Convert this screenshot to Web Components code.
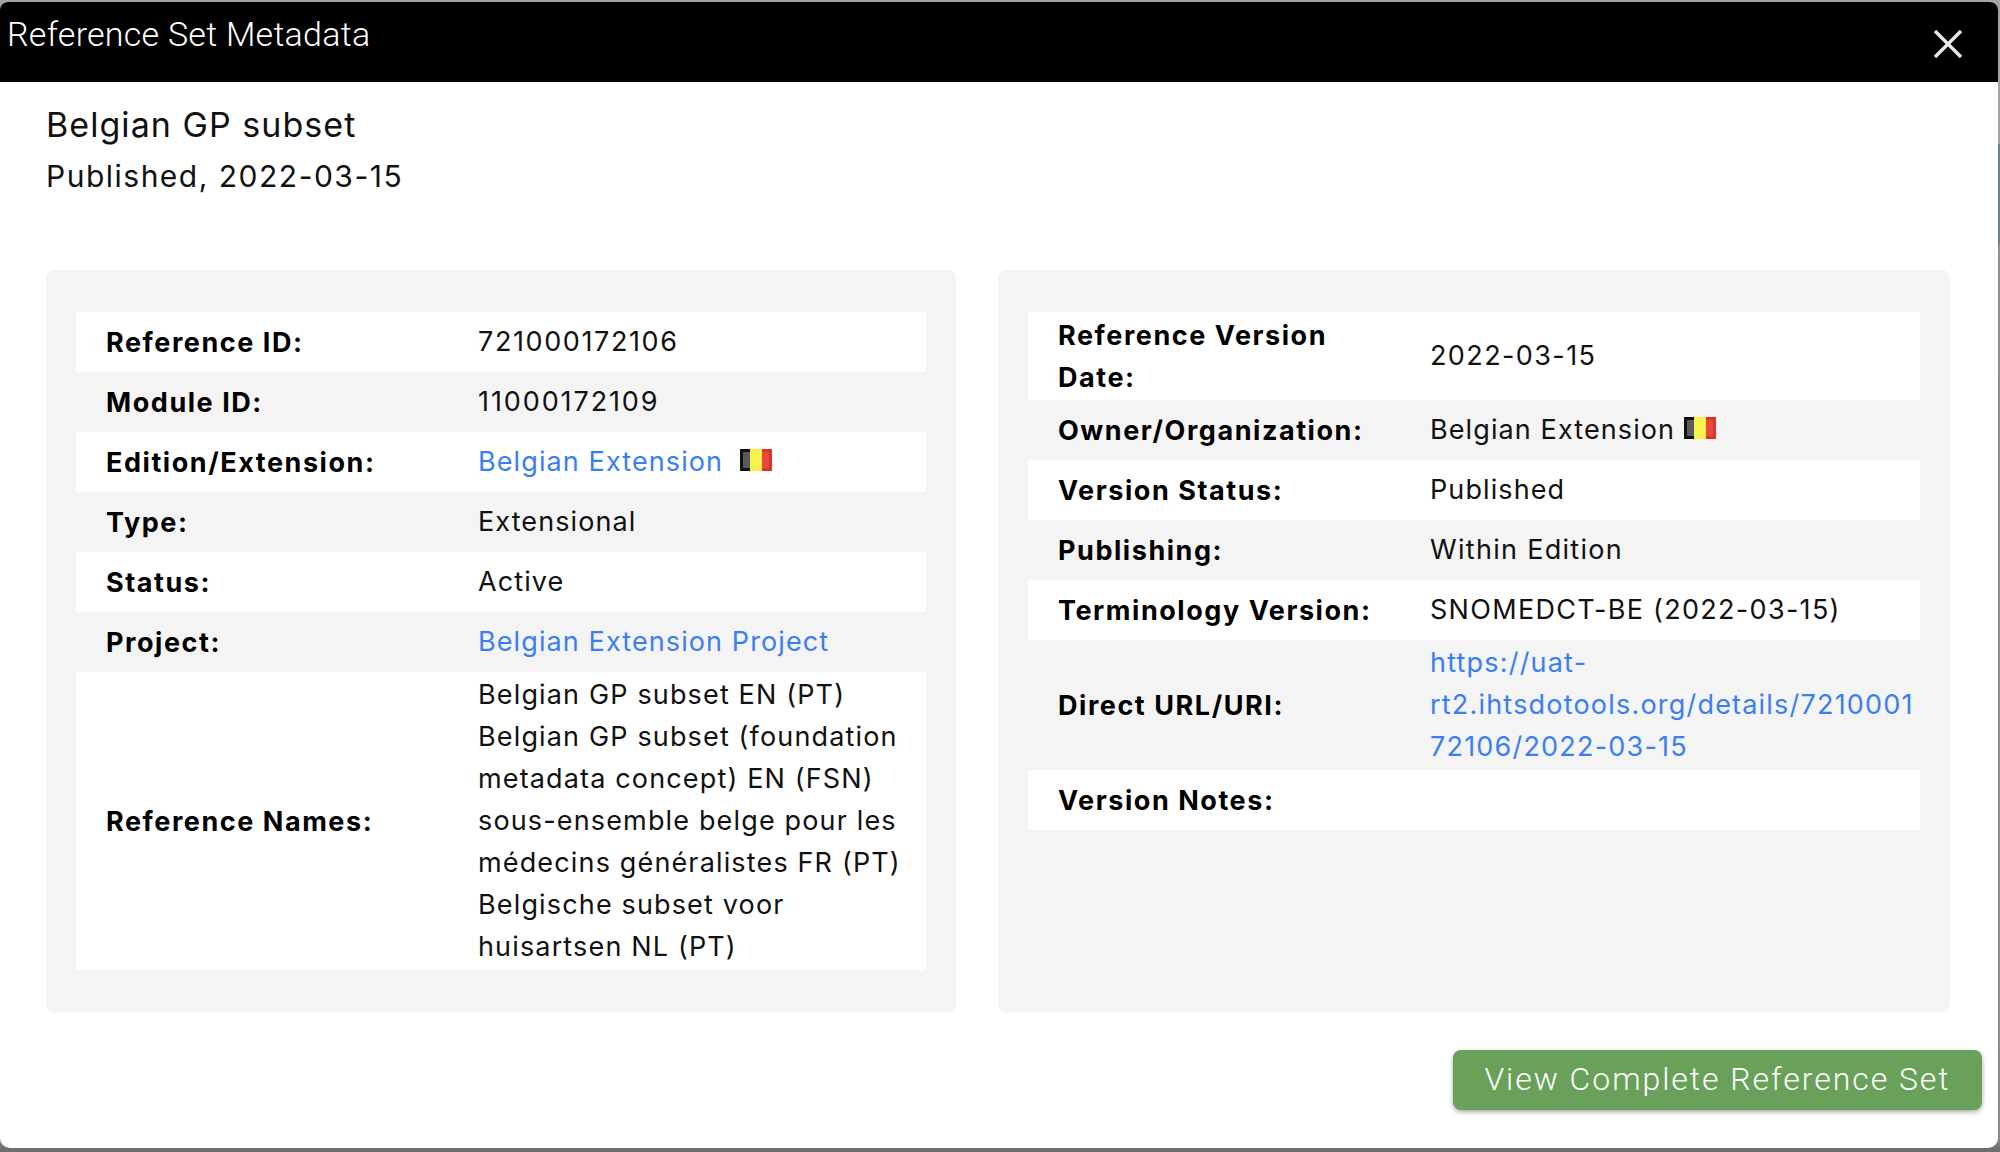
<!DOCTYPE html>
<html>
<head>
<meta charset="utf-8">
<title>Reference Set Metadata</title>
<style>
  html, body { margin: 0; height: 100%; }
  body {
    height: 1152px;
    overflow: hidden;
    background: linear-gradient(#a3a3a3 0, #a3a3a3 144px, #6b7f99 144px, #6b7f99 244px, #919191 244px, #8a8a8a 1140px, #707070 1148px, #6e6e6e 100%);
    font-family: Inter, "Liberation Sans", sans-serif;
  }
</style>
</head>
<body>
<meta-dialog heading="Reference Set Metadata">
  <meta-summary slot="summary" name="Belgian GP subset" status="Published, 2022-03-15"></meta-summary>

  <meta-panel>
    <meta-row label="Reference ID:" style="letter-spacing: 1.6px">721000172106</meta-row>
    <meta-row label="Module ID:" style="letter-spacing: 1.9px">11000172109</meta-row>
    <meta-row label="Edition/Extension:"><a href="#">Belgian Extension</a><be-flag gap="17"></be-flag></meta-row>
    <meta-row label="Type:">Extensional</meta-row>
    <meta-row label="Status:">Active</meta-row>
    <meta-row label="Project:"><a href="#">Belgian Extension Project</a></meta-row>
    <meta-row label="Reference Names:" style="letter-spacing: 1.15px">
      <div>Belgian GP subset EN (PT)</div>
      <div>Belgian GP subset (foundation metadata concept) EN (FSN)</div>
      <div>sous-ensemble belge pour les médecins généralistes FR (PT)</div>
      <div>Belgische subset voor huisartsen NL (PT)</div>
    </meta-row>
  </meta-panel>

  <meta-panel>
    <meta-row label="Reference Version Date:" style="letter-spacing: 1.4px">2022-03-15</meta-row>
    <meta-row label="Owner/Organization:">Belgian Extension<be-flag gap="9"></be-flag></meta-row>
    <meta-row label="Version Status:">Published</meta-row>
    <meta-row label="Publishing:" style="letter-spacing: 1.3px">Within Edition</meta-row>
    <meta-row label="Terminology Version:" style="letter-spacing: 1.3px">SNOMEDCT-BE (2022-03-15)</meta-row>
    <meta-row label="Direct URL/URI:" style="letter-spacing: 1.2px"><a href="#">https://uat-rt2.ihtsdotools.org/details/721000172106/2022-03-15</a></meta-row>
    <meta-row label="Version Notes:"></meta-row>
  </meta-panel>

  <meta-button slot="actions">View Complete Reference Set</meta-button>
</meta-dialog>

<script>
const dialogTemplate = document.createElement('template');
dialogTemplate.innerHTML = `
  <style>
    :host {
      display: flex;
      flex-direction: column;
      box-sizing: border-box;
      height: 1146px;
      margin: 2px 2px 0 0;
      background: #fff;
      border-radius: 8px 8px 10px 10px;
      overflow: hidden;
    }
    header {
      display: flex;
      justify-content: space-between;
      height: 80px;
      padding: 0 36px 0 7px;
      background: #000;
      color: #fff;
      font: 300 34px/64px Roboto, "Liberation Sans", sans-serif;
      letter-spacing: 0.25px;
    }
    header svg { width: 28px; height: 28px; margin-top: 28px; }
    main {
      flex: 1;
      display: grid;
      grid-template-columns: 910px 952px;
      column-gap: 42px;
      align-content: start;
      padding: 0 48px 0 46px;
    }
    ::slotted([slot="summary"]) { grid-column: 1 / -1; }
    footer {
      display: flex;
      justify-content: flex-end;
      padding: 0 16px 38px 0;
    }
  </style>
  <header>
    <span id="title"></span>
    <svg viewBox="0 0 28 28"><path d="M1 1 27 27M27 1 1 27" stroke="#ececec" stroke-width="3.4" fill="none"/></svg>
  </header>
  <main>
    <slot name="summary"></slot>
    <slot></slot>
  </main>
  <footer><slot name="actions"></slot></footer>
`;

class MetaDialog extends HTMLElement {
  constructor() {
    super();
    this.attachShadow({ mode: 'open' });
  }

  connectedCallback() {
    this.shadowRoot.appendChild(dialogTemplate.content.cloneNode(true));
    this.shadowRoot.querySelector('#title').textContent = this.getAttribute('heading');
  }
}

const summaryTemplate = document.createElement('template');
summaryTemplate.innerHTML = `
  <style>
    :host {
      display: block;
      height: 188px;
      padding-top: 20px;
      box-sizing: border-box;
      color: #111;
    }
    div { font-size: 34px; line-height: 46px; letter-spacing: 1.05px; }
    p { margin: 6px 0 0; font-size: 30px; line-height: 44px; letter-spacing: 1.5px; }
  </style>
  <div id="name"></div>
  <p id="status"></p>
`;

class MetaSummary extends HTMLElement {
  constructor() {
    super();
    this.attachShadow({ mode: 'open' });
  }

  connectedCallback() {
    this.shadowRoot.appendChild(summaryTemplate.content.cloneNode(true));
    this.shadowRoot.querySelector('#name').textContent = this.getAttribute('name');
    this.shadowRoot.querySelector('#status').textContent = this.getAttribute('status');
  }
}

const panelTemplate = document.createElement('template');
panelTemplate.innerHTML = `
  <style>
    :host {
      display: block;
      height: 742px;
      box-sizing: border-box;
      padding: 42px 30px;
      background: #f4f4f4;
      border-radius: 8px;
    }
  </style>
  <slot></slot>
`;

class MetaPanel extends HTMLElement {
  constructor() {
    super();
    this.attachShadow({ mode: 'open' });
  }

  connectedCallback() {
    this.shadowRoot.appendChild(panelTemplate.content.cloneNode(true));
    // stripes: first row white, then every other one
    [...this.children].forEach((row, i) => row.toggleAttribute('striped', i % 2 === 0));
  }
}

const rowTemplate = document.createElement('template');
rowTemplate.innerHTML = `
  <style>
    :host {
      display: grid;
      grid-template-columns: 402px 1fr;
      align-items: center;
      box-sizing: border-box;
      min-height: 60px;
      padding: 2px 0;
      font-size: 27px;
      line-height: 42px;
      letter-spacing: 1.1px;
      color: #111;
    }
    :host([striped]) { background: #fff; }
    #label {
      padding: 0 50px 0 30px;
      font-weight: 700;
      letter-spacing: 1.55px;
      color: #000;
      transform: translateY(1px);
    }
    #value { padding-right: 4px; overflow-wrap: anywhere; }
    ::slotted(a) { color: #3a7ef5; text-decoration: none; }
  </style>
  <div id="label"></div>
  <div id="value"><slot></slot></div>
`;

class MetaRow extends HTMLElement {
  constructor() {
    super();
    this.attachShadow({ mode: 'open' });
  }

  connectedCallback() {
    this.shadowRoot.appendChild(rowTemplate.content.cloneNode(true));
    this.shadowRoot.querySelector('#label').textContent = this.getAttribute('label');
  }
}

const flagTemplate = document.createElement('template');
flagTemplate.innerHTML = `
  <style>
    :host { display: inline-block; vertical-align: 0; line-height: 0; }
    svg { display: block; width: 32px; height: 22px; }
    g { filter: blur(0.5px); }
  </style>
  <svg viewBox="0 0 32 22">
    <rect width="11" height="22" fill="#111"/>
    <g>
      <rect x="3" y="3" width="8" height="16" fill="#5a5a5a"/>
    </g>
    <rect x="10" width="12" height="22" fill="#f7f04e"/>
    <rect x="22" width="10" height="22" fill="#d9352b"/>
    <g>
      <rect x="22" y="3" width="7" height="16" fill="#e8493e"/>
    </g>
  </svg>
`;

class BeFlag extends HTMLElement {
  constructor() {
    super();
    this.attachShadow({ mode: 'open' });
  }

  connectedCallback() {
    this.shadowRoot.appendChild(flagTemplate.content.cloneNode(true));
    this.style.marginLeft = this.getAttribute('gap') + 'px';
  }
}

const buttonTemplate = document.createElement('template');
buttonTemplate.innerHTML = `
  <style>
    :host {
      display: block;
      width: 529px;
      height: 60px;
      border-radius: 8px;
      background: #69a05a;
      box-shadow: 0 2px 5px rgba(0, 0, 0, 0.35);
      color: #fff;
      font: 300 32px/58px Roboto, "Liberation Sans", sans-serif;
      letter-spacing: 1.95px;
      text-align: center;
      white-space: nowrap;
    }
  </style>
  <slot></slot>
`;

class MetaButton extends HTMLElement {
  constructor() {
    super();
    this.attachShadow({ mode: 'open' });
  }

  connectedCallback() {
    this.shadowRoot.appendChild(buttonTemplate.content.cloneNode(true));
  }
}

customElements.define('meta-dialog', MetaDialog);
customElements.define('meta-summary', MetaSummary);
customElements.define('meta-panel', MetaPanel);
customElements.define('meta-row', MetaRow);
customElements.define('be-flag', BeFlag);
customElements.define('meta-button', MetaButton);
</script>
</body>
</html>
